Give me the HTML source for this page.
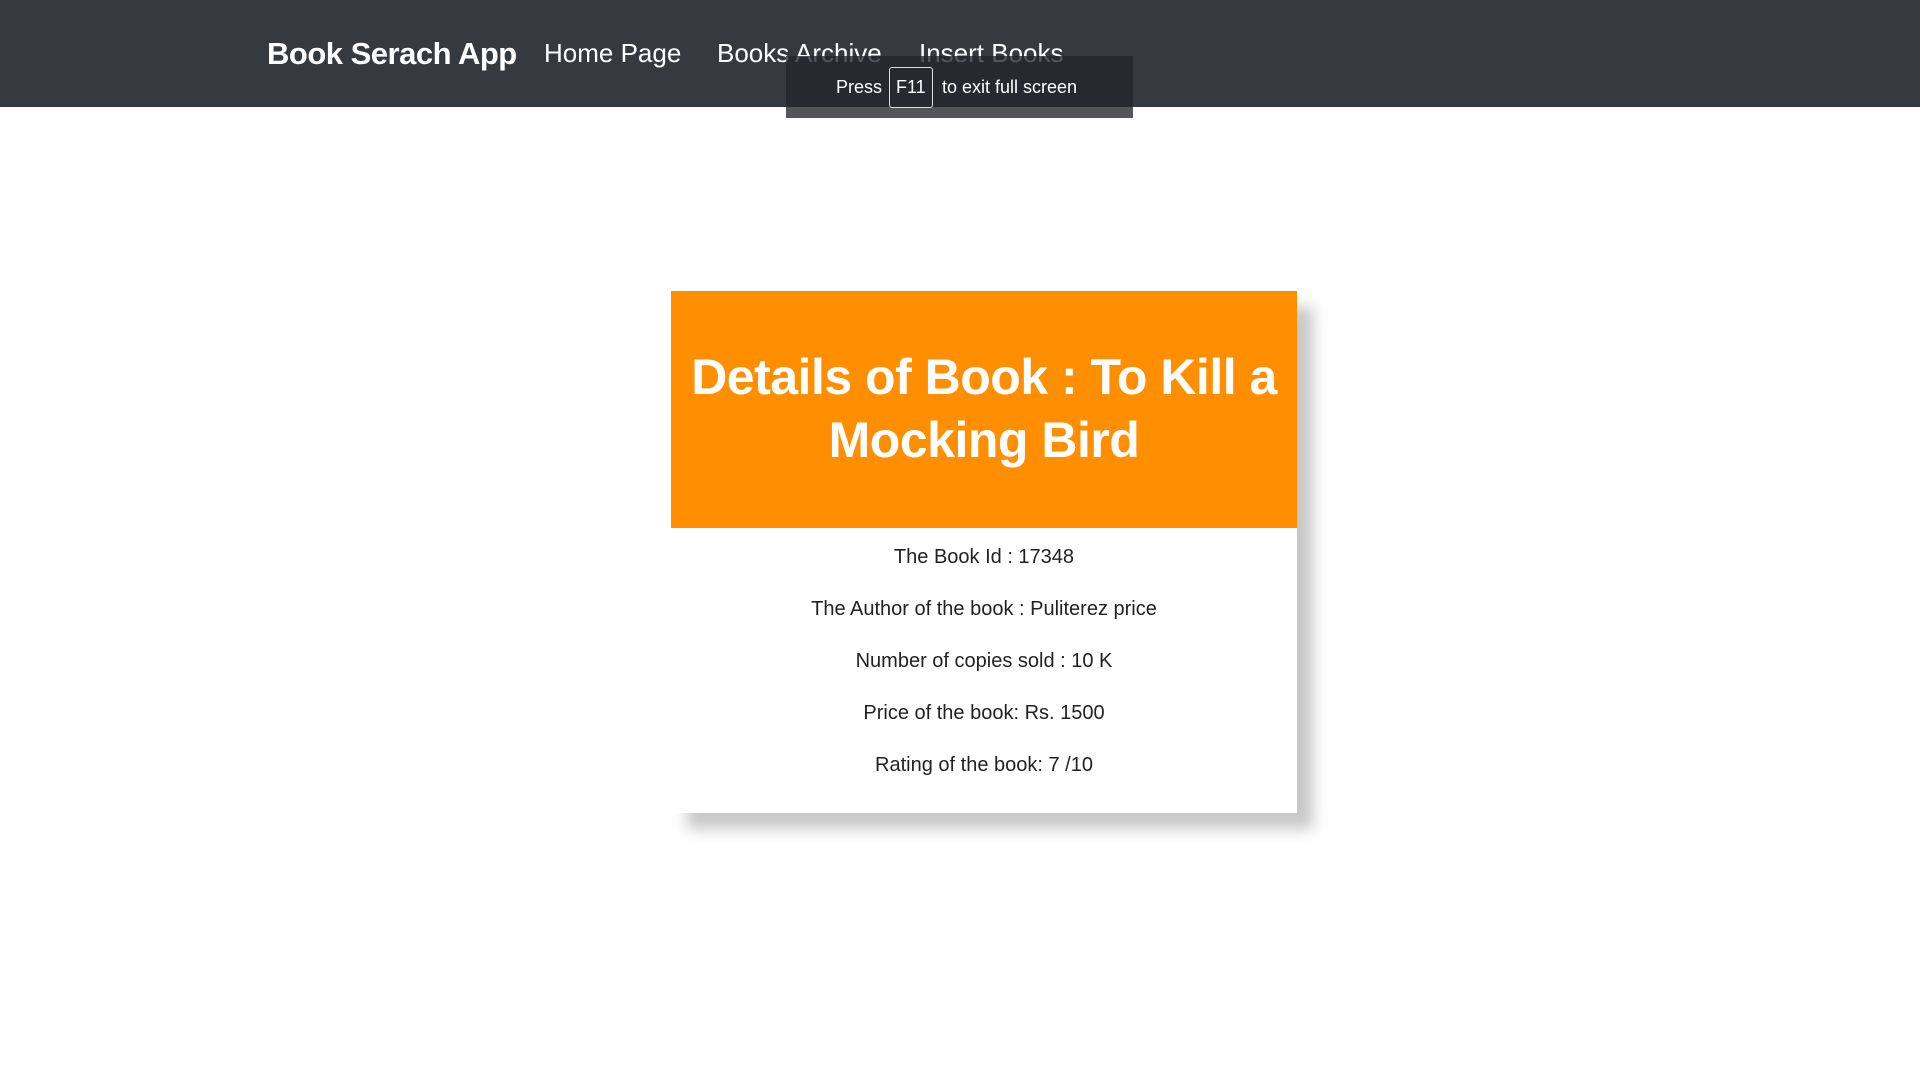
<!DOCTYPE html>
<html><head><meta charset="utf-8"><style>
*{margin:0;padding:0;box-sizing:border-box}
body{width:1920px;height:1080px;background:#fff;font-family:"Liberation Sans",sans-serif;position:relative;overflow:hidden}
.nav{position:absolute;left:0;top:0;width:1920px;height:107px;background:#343a40}
.t{position:absolute;white-space:nowrap;color:#fff;line-height:1}
.ov{position:absolute;left:786px;top:56px;width:347px;height:62px;background:rgba(35,37,42,0.78)}
.card{position:absolute;left:671px;top:291px;width:626px;height:522px;background:#fff;box-shadow:16px 16px 14px rgba(0,0,0,0.22)}
.hd{height:237px;background:#ff8f00;color:#fff;font-size:50px;font-weight:bold;line-height:63px;text-align:center;padding-top:55px;letter-spacing:-0.5px}
.ln{position:absolute;left:0;width:626px;text-align:center;font-size:20px;color:#222;line-height:1}
</style></head><body>
<div class="nav"></div>
<div class="t" style="left:267px;top:38px;font-size:31px;font-weight:bold;letter-spacing:-0.5px">Book Serach App</div>
<div class="t" style="left:544px;top:40px;font-size:26px">Home Page</div>
<div class="t" style="left:717px;top:40px;font-size:26px">Books Archive</div>
<div class="t" style="left:919px;top:40px;font-size:26px">Insert Books</div>
<div class="ov"></div>
<div class="t" style="left:836px;top:78px;font-size:18px">Press</div>
<div style="position:absolute;left:889px;top:67px;width:44px;height:41px;border:1px solid #ddd;border-radius:3px"></div>
<div class="t" style="left:896px;top:78px;font-size:18px">F11</div>
<div class="t" style="left:942px;top:78px;font-size:18px">to exit full screen</div>
<div class="card">
<div class="hd">Details of Book : To Kill a<br>Mocking Bird</div>
<div class="ln" style="top:256px">The Book Id : 17348</div>
<div class="ln" style="top:308px">The Author of the book : Puliterez price</div>
<div class="ln" style="top:360px">Number of copies sold : 10 K</div>
<div class="ln" style="top:412px">Price of the book: Rs. 1500</div>
<div class="ln" style="top:464px">Rating of the book: 7 /10</div>
</div>
</body></html>
